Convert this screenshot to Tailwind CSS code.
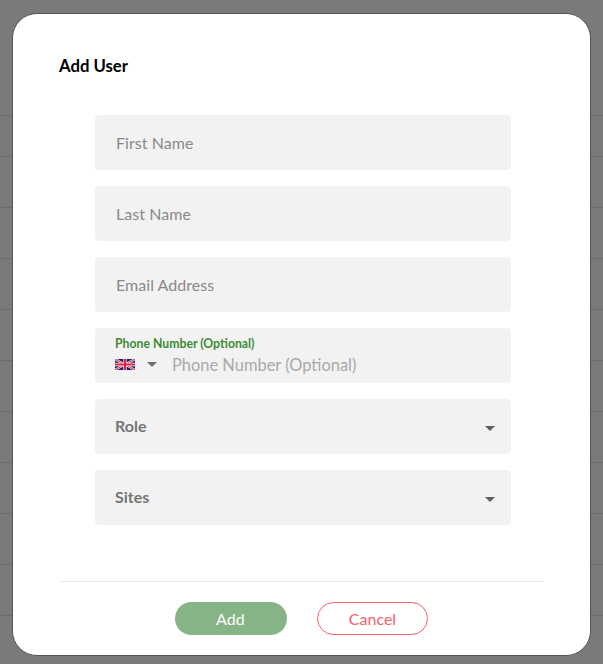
<!DOCTYPE html>
<html>
<head>
<meta charset="utf-8">
<script src="https://cdn.jsdelivr.net/npm/@tailwindcss/browser@4"></script>
</head>
<body class="m-0 font-['Lato',sans-serif]">
<div class="relative h-[664px] w-[603px] overflow-hidden bg-[#7a7a7a]">
  <div class="flex flex-col">
    <div class="h-[116px] border-b border-[#6c6c6c]"></div>
    <div class="h-[41px] border-b border-[#6c6c6c]"></div>
    <div class="h-[51px] border-b border-[#6c6c6c]"></div>
    <div class="h-[51px] border-b border-[#6c6c6c]"></div>
    <div class="h-[51px] border-b border-[#6c6c6c]"></div>
    <div class="h-[51px] border-b border-[#6c6c6c]"></div>
    <div class="h-[51px] border-b border-[#6c6c6c]"></div>
    <div class="h-[51px] border-b border-[#6c6c6c]"></div>
    <div class="h-[51px] border-b border-[#6c6c6c]"></div>
    <div class="h-[51px] border-b border-[#6c6c6c]"></div>
    <div class="h-[51px] border-b border-[#6c6c6c]"></div>
  </div>
  <div class="absolute left-[12px] top-[13px] flex h-[643px] w-[579px] flex-col rounded-[25px] border border-[#555] bg-white">
    <h2 class="ml-[46px] mt-[42px] text-[16.7px] leading-[20px] font-bold text-black">Add User</h2>
    <form class="mx-[82px] mt-[39px] flex w-[416px] flex-col gap-4">
      <div class="flex h-[55px] items-center rounded bg-[#f2f2f2] px-[21px] text-[16px] tracking-[0.05px] text-[#8a8a8a]">First Name</div>
      <div class="flex h-[55px] items-center rounded bg-[#f2f2f2] px-[21px] text-[16px] tracking-[0.05px] text-[#8a8a8a]">Last Name</div>
      <div class="flex h-[55px] items-center rounded bg-[#f2f2f2] px-[21px] text-[16px] tracking-[0.05px] text-[#8a8a8a]">Email Address</div>
      <div class="flex h-[55px] flex-col rounded bg-[#f2f2f2] pl-[20px] pt-[8px]">
        <span class="text-[12.25px] leading-[15px] font-bold text-[#3c8c32]">Phone Number (Optional)</span>
        <div class="mt-[3px] flex items-center">
          <svg class="h-[11px] w-[20px]" viewBox="0 0 60 33">
            <rect width="60" height="33" fill="#18206e"/>
            <path d="M0 0L60 33M60 0L0 33" stroke="#fff" stroke-width="6"/>
            <path d="M0 0L60 33M60 0L0 33" stroke="#e0223f" stroke-width="3"/>
            <path d="M30 0V33M0 16.5H60" stroke="#fff" stroke-width="10"/>
            <path d="M30 0V33M0 16.5H60" stroke="#e0223f" stroke-width="6.5"/>
          </svg>
          <svg class="ml-[12px] h-[5px] w-[10px]" viewBox="0 0 10 5"><path d="M0 0H10L5 5Z" fill="#6f6f6f"/></svg>
          <span class="ml-[15px] mt-[1px] text-[16.45px] leading-[20px] text-[#a9a9a9]">Phone Number (Optional)</span>
        </div>
      </div>
      <div class="flex h-[55px] items-center justify-between rounded bg-[#f2f2f2] pl-[20px] pr-[16px]">
        <span class="mb-[2px] text-[16px] font-bold text-[#757575]">Role</span>
        <svg class="mt-[3px] h-[5px] w-[10px]" viewBox="0 0 10 5"><path d="M0 0H10L5 5Z" fill="#5f5f5f"/></svg>
      </div>
      <div class="flex h-[55px] items-center justify-between rounded bg-[#f2f2f2] pl-[20px] pr-[16px]">
        <span class="mb-[2px] text-[16px] font-bold text-[#757575]">Sites</span>
        <svg class="mt-[3px] h-[5px] w-[10px]" viewBox="0 0 10 5"><path d="M0 0H10L5 5Z" fill="#5f5f5f"/></svg>
      </div>
    </form>
    <div class="mx-[46px] mt-[56px] h-px w-[485px] bg-[#e8e8e8]"></div>
    <div class="ml-[162px] mt-[20px] flex items-center gap-[30px]">
      <button class="h-[33px] w-[112px] pr-[1px] rounded-full bg-[#87b486] text-[16px] tracking-[0.1px] text-white">Add</button>
      <button class="h-[33px] w-[111px] rounded-full border border-[#f4606c] bg-white text-[16px] text-[#f4606c]">Cancel</button>
    </div>
  </div>
</div>
</body>
</html>
